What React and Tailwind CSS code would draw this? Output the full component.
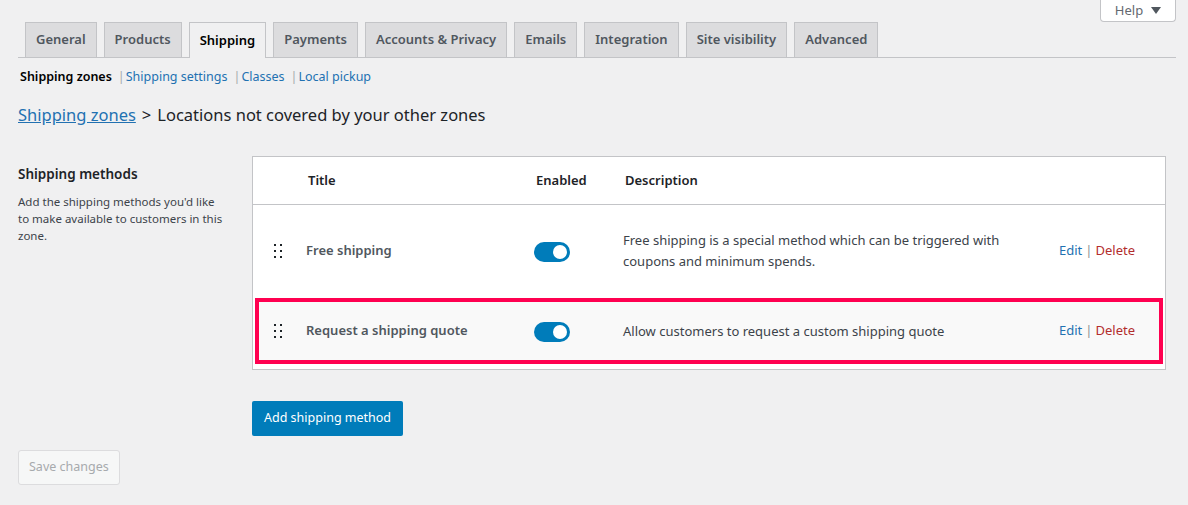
import React from "react";

const tabs = [
  "General",
  "Products",
  "Shipping",
  "Payments",
  "Accounts & Privacy",
  "Emails",
  "Integration",
  "Site visibility",
  "Advanced",
];

const methods = [
  {
    title: "Free shipping",
    desc: "Free shipping is a special method which can be triggered with coupons and minimum spends.",
  },
  {
    title: "Request a shipping quote",
    desc: "Allow customers to request a custom shipping quote",
    highlight: true,
  },
];

const DragHandle = () => (
  <svg width="10" height="14" viewBox="0 0 10 14" className="block">
    {[0, 6, 12].map((y) => (
      <g key={y}>
        <rect x="1" y={y} width="2" height="2" fill="#1d2327" />
        <rect x="7" y={y} width="2" height="2" fill="#1d2327" />
      </g>
    ))}
  </svg>
);

const Toggle = () => (
  <span className="relative inline-block w-[36px] h-[20px] rounded-full bg-[#007cba]">
    <span className="absolute right-[3px] top-[3px] w-[14px] h-[14px] rounded-full bg-white" />
  </span>
);

export default function App() {
  return (
    <div
      className="min-h-[505px] bg-[#f0f0f1] text-[#3c434a] text-[13px] relative"
      style={{ fontFamily: '"Noto Sans", sans-serif' }}
    >
      {/* help tab */}
      <div className="absolute right-[12px] top-0 w-[76px] h-[22px] bg-white border border-t-0 border-[#c3c4c7] rounded-b-[4px] flex items-center justify-center gap-[8px] text-[13px] text-[#646970]">
        <span>Help</span>
        <svg width="10" height="7" viewBox="0 0 10 7" className="block">
          <path d="M0 0h10L5 7z" fill="#50575e" />
        </svg>
      </div>

      <div className="px-[18px] pt-[22px] pr-[12px]">
        {/* nav tabs */}
        <div className="flex gap-[7px] pl-[7px] border-b border-[#c3c4c7]">
          {tabs.map((t) => (
            <div
              key={t}
              className={
                t === "Shipping"
                  ? "h-[36px] -mb-px px-[10px] flex items-center border border-b-0 border-[#c3c4c7] bg-[#f0f0f1] text-[13px] font-semibold text-black"
                  : "h-[35px] px-[10px] flex items-center border border-b-0 border-[#c3c4c7] bg-[#dcdcde] text-[13px] font-semibold text-[#50575e]"
              }
            >
              {t}
            </div>
          ))}
        </div>

        {/* subsubsub */}
        <div className="flex items-center mt-[10px] pl-[2px] text-[12.5px] leading-[18px]">
          <span className="font-semibold text-black">Shipping zones</span>
          <span className="text-[#a7aaad] ml-[6px] mr-[1px]">|</span>
          <span className="text-[#2271b1]">Shipping settings</span>
          <span className="text-[#a7aaad] ml-[6px] mr-[1px]">|</span>
          <span className="text-[#2271b1]">Classes</span>
          <span className="text-[#a7aaad] ml-[6px] mr-[1px]">|</span>
          <span className="text-[#2271b1]">Local pickup</span>
        </div>

        {/* heading */}
        <h2 className="mt-[17px] text-[16.5px] leading-[24px] text-[#1d2327] font-normal">
          <span className="text-[#2271b1] underline">Shipping zones</span>
          <span className="mx-[6px]">&gt;</span>
          Locations not covered by your other zones
        </h2>

        {/* form row */}
        <div className="flex mt-[29px] pr-[10px]">
          <div className="w-[234px] shrink-0 pt-[8px]">
            <div className="text-[13.5px] font-semibold text-[#1d2327]">
              Shipping methods
            </div>
            <p className="mt-[9px] w-[205px] text-[11.5px] leading-[17px] text-[#3c434a]">
              Add the shipping methods you'd like to make available to customers in this zone.
            </p>
          </div>

          <div className="flex-1">
            <div className="bg-white border border-[#c3c4c7]">
              {/* header */}
              <div className="flex items-center h-[48px] border-b border-[#c3c4c7] text-[13px] font-semibold text-[#1d2327]">
                <div className="w-[55px]" />
                <div className="w-[228px]">Title</div>
                <div className="w-[89px]">Enabled</div>
                <div className="flex-1">Description</div>
              </div>
              {methods.map((m) => (
                <div
                  key={m.title}
                  className={
                    m.highlight
                      ? "flex items-center h-[66px] mx-[2px] mt-[1px] mb-[5px] bg-[#f9f9f9] border-[4px] border-[#ff0050]"
                      : "flex items-center h-[92px]"
                  }
                >
                  <div className={m.highlight ? "w-[47px] pl-[14px]" : "w-[53px] pl-[20px]"}>
                    <DragHandle />
                  </div>
                  <div className="w-[228px] text-[13px] font-semibold text-[#50575e]">
                    {m.title}
                  </div>
                  <div className="w-[89px] flex pt-[2px]">
                    <Toggle />
                  </div>
                  <div className="w-[420px] text-[13px] leading-[21px] text-[#3c434a] pr-[20px]">
                    {m.desc}
                  </div>
                  <div className="flex-1 pl-[16px] text-[13px]">
                    <span className="text-[#2271b1]">Edit</span>
                    <span className="text-[#8c8f94] mx-[3px]">|</span>
                    <span className="text-[#b32d2e]">Delete</span>
                  </div>
                </div>
              ))}
            </div>

            <button className="mt-[31px] h-[35px] px-[12px] bg-[#007cba] text-white text-[12.5px] rounded-[2px]">
              Add shipping method
            </button>
          </div>
        </div>

        <button className="mt-[14px] h-[35px] px-[10px] bg-[#f6f7f7] border border-[#dcdcde] text-[#a7aaad] text-[12.5px] rounded-[3px]">
          Save changes
        </button>
      </div>
    </div>
  );
}
